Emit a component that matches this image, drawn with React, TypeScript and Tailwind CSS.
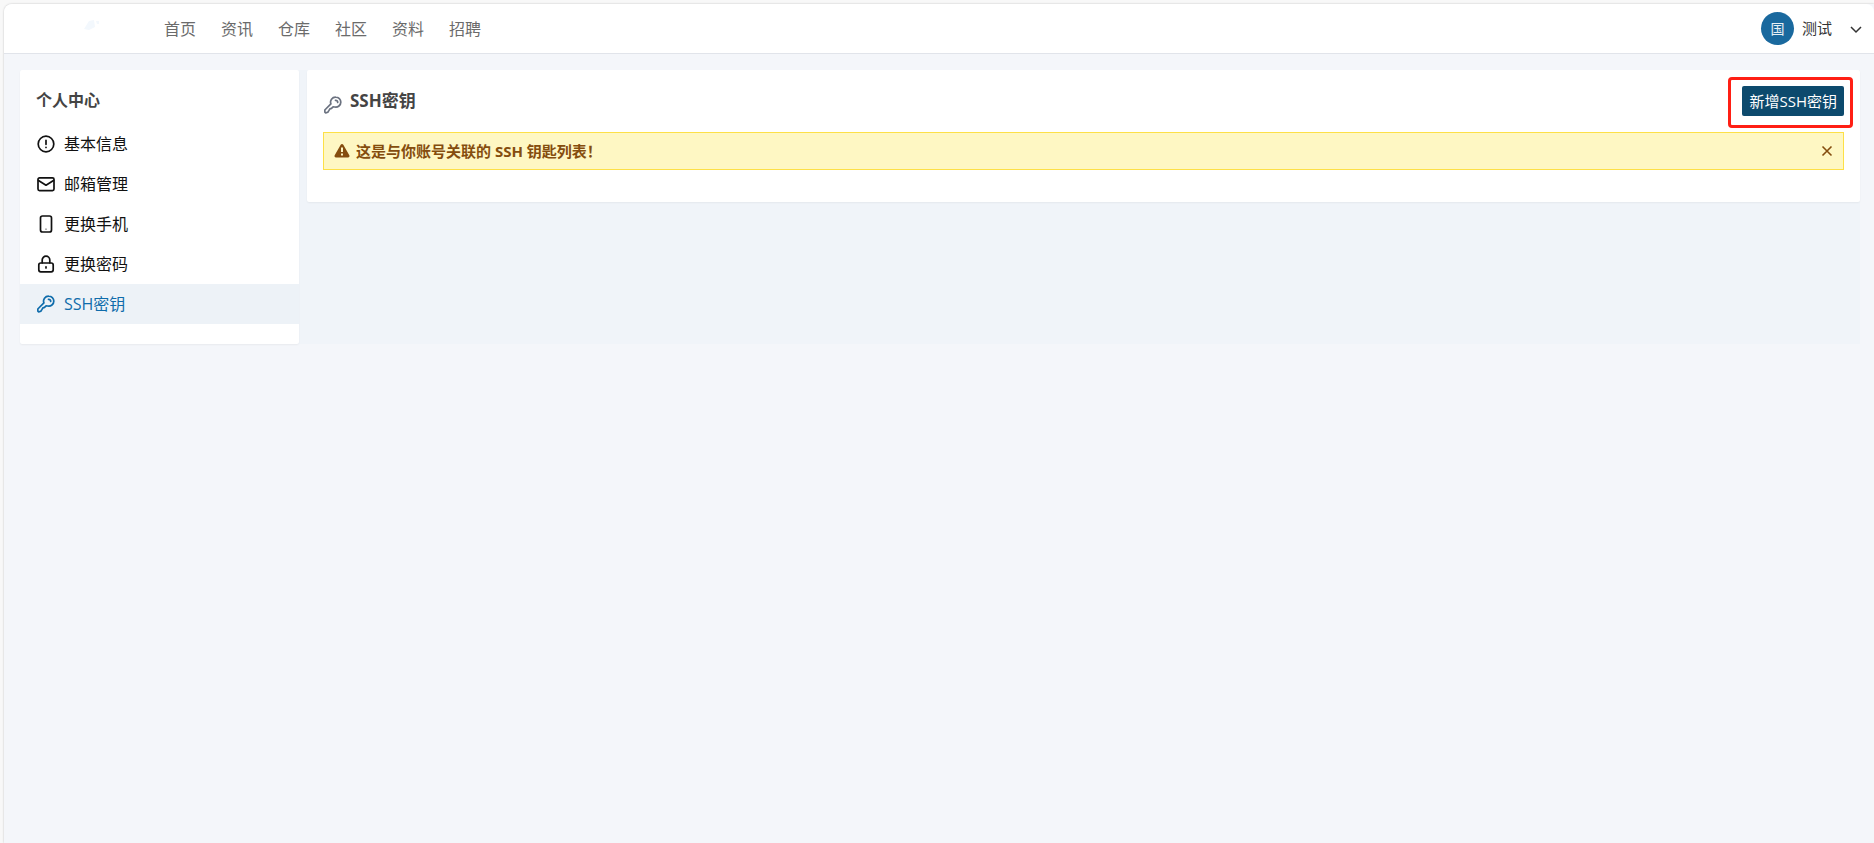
import type { ReactNode } from "react";

const navItems = ["首页", "资讯", "仓库", "社区", "资料", "招聘"];

const Icon = ({ children, className = "" }: { children: ReactNode; className?: string }) => (
  <svg
    viewBox="0 0 18 18"
    fill="none"
    stroke="currentColor"
    strokeWidth="1.7"
    strokeLinecap="round"
    strokeLinejoin="round"
    aria-hidden="true"
    className={`size-[18px] shrink-0 ${className}`}
  >
    {children}
  </svg>
);

const KeyIcon = ({ className }: { className?: string }) => (
  <Icon className={className}>
    <path d="M11.8 1.1a5 5 0 0 1 5 5 5 5 0 0 1-6.1 4.9l-1.6-.2-1.6 1.6-1.6.5-.9 1.5-1.2 1.9-2.1.6-.8-.6-.1-2.3 6.1-6.1a5 5 0 0 1 4.900-6.800z" />
    <path d="M11.5 4.300a2 2 0 0 1 2.200 2.200" />
  </Icon>
);

const menuItems = [
  {
    label: "基本信息",
    icon: (
      <Icon>
        <circle cx="9" cy="9" r="7.8" />
        <path d="M9 5.300v4M9 12.300v.1" />
      </Icon>
    ),
  },
  {
    label: "邮箱管理",
    icon: (
      <Icon>
        <rect x="1" y="2.8" width="16" height="12.8" rx="1.5" />
        <path d="M1.500 5.500L9 10.200l7.500-4.700" />
      </Icon>
    ),
  },
  {
    label: "更换手机",
    icon: (
      <Icon>
        <rect x="3.5" y="1" width="11" height="16" rx="2" />
        <path strokeWidth="1.2" d="M9 14v.1" />
      </Icon>
    ),
  },
  {
    label: "更换密码",
    icon: (
      <Icon>
        <rect x="1.8" y="8" width="14.4" height="8.8" rx="2" />
        <path d="M5.200 7.800V5a3.800 3.800 0 0 1 7.600 0v2.800M9 11.800v1.200" />
      </Icon>
    ),
  },
  { label: "SSH密钥", icon: <KeyIcon />, active: true },
];

const Header = () => {
  return (
    <header className="flex h-[50px] items-center justify-between rounded-t-lg border-b border-[#e1e4ea] bg-white pr-2.5">
      <div className="flex items-center">
        <div className="flex w-40 justify-center pl-4">
          <svg viewBox="0 0 16 12" aria-hidden="true" className="mb-2 h-3 w-4">
            <path fill="#f3f8fd" d="M0 10L5 2l5-1 1 7-6 3zM12 2h3v3h-2z" />
          </svg>
        </div>
        <nav className="flex gap-[25px] text-[#6b6b6b]">
          {navItems.map((item) => (
            <a key={item} href="#" className="hover:text-[#1a699e]">
              {item}
            </a>
          ))}
        </nav>
      </div>
      <button className="flex items-center text-[15px] text-[#333]">
        <span className="flex size-[33px] items-center justify-center rounded-full bg-[#1a699e] text-sm text-white/90">
          国
        </span>
        <span className="ml-2">测试</span>
        <svg
          viewBox="0 0 16 16"
          fill="none"
          stroke="currentColor"
          strokeWidth="1.5"
          aria-hidden="true"
          className="ml-4 size-4"
        >
          <path d="M3 6l5 5 5-5" />
        </svg>
      </button>
    </header>
  );
};

const Sidebar = () => {
  return (
    <aside className="w-[279px] shrink-0 rounded-xs bg-white pt-[18px] pb-5 shadow-xs">
      <h2 className="mb-3 px-4 font-bold text-[#444]">个人中心</h2>
      <ul>
        {menuItems.map(({ label, icon, active }) => (
          <li key={label}>
            <a
              href="#"
              className={`flex h-10 items-center gap-[9px] px-[17px] ${
                active ? "bg-[#edf2f7] text-[#0f6cab]" : "text-[#111]"
              }`}
            >
              {icon}
              {label}
            </a>
          </li>
        ))}
      </ul>
    </aside>
  );
};

const SshKeys = () => {
  return (
    <section className="flex-1 self-start rounded-xs bg-white px-4 pt-[7px] pb-8 shadow-xs">
      <div className="mb-1 flex items-start justify-between">
        <h1 className="flex items-center gap-2 pt-[11px] text-[17px] leading-6 font-bold text-[#444]">
          <KeyIcon className="mt-2 ml-px text-[#6b7280]" />
          SSH密钥
        </h1>
        <div className="-mr-[9px] rounded-sm border-3 border-[#ff1f14] pt-1.5 pr-1.5 pb-[9px] pl-[11px]">
          <button className="block h-[30px] rounded-xs bg-[#0d4a6d] px-[7px] text-[15px] text-white">
            新增SSH密钥
          </button>
        </div>
      </div>
      <div
        role="alert"
        className="flex h-[38px] items-center border border-[#fde047] bg-[#fef7c3] px-2.5 text-[15px] font-bold text-[#854d0e]"
      >
        <svg viewBox="0 0 16 16" aria-hidden="true" className="mr-1.5 size-4">
          <path
            fill="currentColor"
            d="M8 1c.6 0 1 .3 1.300.8l6 10.500c.6 1-.1 2.200-1.300 2.200H2c-1.200 0-1.900-1.200-1.300-2.200l6-10.500C7 1.300 7.400 1 8 1z"
          />
          <path stroke="#fef7c3" strokeWidth="2" d="M8 4.500v4.500M8 10.500v2" />
        </svg>
        这是与你账号关联的 SSH 钥匙列表！
        <button aria-label="关闭" className="ml-auto">
          <svg
            viewBox="0 0 12 12"
            stroke="currentColor"
            strokeWidth="1.6"
            aria-hidden="true"
            className="size-3"
          >
            <path d="M1.500 1.500l9 9M10.500 1.500l-9 9" />
          </svg>
        </button>
      </div>
    </section>
  );
};

export default function App() {
  return (
    <div className="min-h-screen bg-[#f8f8f8] pt-1 pl-1 font-['Open_Sans','Noto_Sans_CJK_SC',sans-serif]">
      <div className="min-h-[calc(100vh-4px)] rounded-tl-lg bg-[#f4f6fa] shadow-[0_0_2px_rgba(0,0,0,0.25)]">
        <Header />
        <main className="py-4 pr-3.5 pl-4">
          <div className="flex gap-2 bg-[#f0f4f9]">
            <Sidebar />
            <SshKeys />
          </div>
        </main>
      </div>
    </div>
  );
}
